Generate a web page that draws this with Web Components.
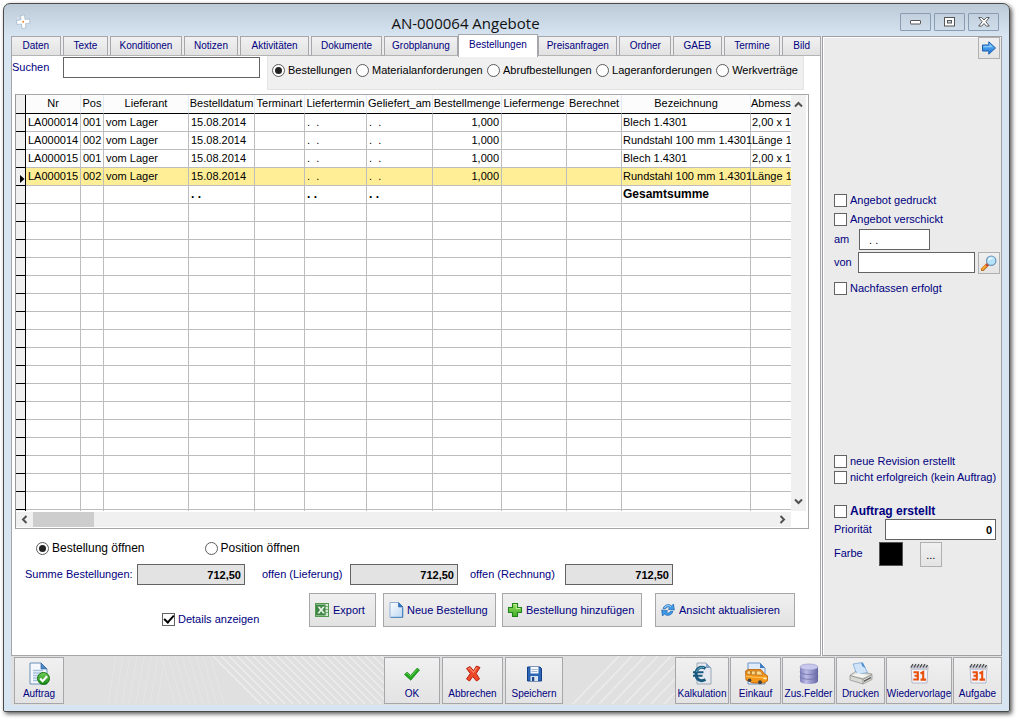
<!DOCTYPE html>
<html lang="de">
<head>
<meta charset="utf-8">
<title>AN-000064 Angebote</title>
<style>
  html { height: 100%; }
  body {
    margin: 0; min-height: 100%; box-sizing: border-box; padding: 3px 9px 9px 3px;
    display: flex; background: #fff; color: #000;
    font: 11px/14px "Liberation Sans", Arial, sans-serif;
    --navy: #000080; --line: #a6a6ab; --field: #636363; --face: #ebebeb;
  }
</style>
</head>
<body>
<app-window></app-window>
<script>
const ICONS = {
  plusmark: '<g stroke="#93aac0" stroke-width=".6" fill="#fff"><path d="M2 3 4.500 1.500 6 6l3-.5L8.500 2 11 1.500 12 5l3-.4.5 4-3.500.8.5 4.100-4 .5-.5-4-4 .8L3.500 7 7 6Z" stroke="none" opacity=".25" transform="translate(-1 1)"/><path d="M5.500 1.500 9.500 1l.5 4.500 4.500-.5.5 4-4.500.7.5 4.300-4 .5-.5-4.500-4.500.5-.5-4L6 5.800Z"/></g><circle cx="8.200" cy="7.800" r="1" fill="#e8852c"/>',
  arrow: '<path d="M1.500 5h6.300V1.800L14.500 8l-6.700 6.200V11H1.500Z" fill="url(#b)" stroke="#1d5fae"/><path d="M2.500 6h6V4l3.500 3.300H2.500Z" fill="#9bd2fb" opacity=".8"/><defs><linearGradient id="b" x2="0" y2="1"><stop stop-color="#6cc0fb"/><stop offset="1" stop-color="#1e76d6"/></linearGradient></defs>',
  lens: '<path d="M6.500 9.500 1.500 14.500" stroke="#b86b13" stroke-width="3.400" stroke-linecap="round"/><path d="M6.300 9.300 1.600 14" stroke="#f7a63b" stroke-width="2" stroke-linecap="round"/><path d="m7.300 8.700-2 2" stroke="#c33" stroke-width="2"/><circle cx="10.200" cy="5.700" r="4.700" fill="#b5e4fa" stroke="#6f94b8" stroke-width="1.200"/><path d="M7.200 5.500a3 3 0 0 1 3-2.800c1.500 0 2.200.8 2.200.8-2 0-3.500.8-5.200 2Z" fill="#fff"/>',
  excel: '<rect x="1.500" y="1.500" width="13" height="13" fill="#d5e8d2" stroke="#559852"/><path d="M11 4.500h3M11 7.500h3M11 10.500h3" stroke="#79ae75"/><path d="M2 2.500h9.500v11H2z" fill="#3d8a43"/><path d="M3 4.300h3l1.200 2 1.300-2h3L8.700 8l3 3.800h-3L7.200 9.600l-1.400 2.200h-3L5.600 8Z" fill="#e9f5e7" stroke="#1f6428" stroke-width=".5"/>',
  page: '<path d="M2 .5h8.500L15 5v10.500H2Z" fill="url(#g)" stroke="#8fb0d4"/><path d="M10.500.5V5H15Z" fill="#2f76c4" stroke="#2b66ab" stroke-width=".6"/><path d="M14.500 5.500v9.800H3" fill="none" stroke="#4b83be"/><defs><linearGradient id="g" x2="1" y2="1"><stop stop-color="#fff"/><stop offset="1" stop-color="#b9d6f2"/></linearGradient></defs>',
  plus: '<path d="M5.500 1.500h5v4h4v5h-4v4h-5v-4h-4v-5h4Z" fill="url(#p)" stroke="#23831c" stroke-width="1.100"/><path d="M6.500 2.500h2.800v4h4" fill="none" stroke="#c5f29c"/><defs><linearGradient id="p" x2="0" y2="1"><stop stop-color="#9be05e"/><stop offset="1" stop-color="#3cae2a"/></linearGradient></defs>',
  refresh: '<g fill="#3b9be8" stroke="#1a62b0" stroke-width=".7"><path d="M3 6.500C4.500 2.500 9 1.500 11.500 4L13.500 2l.8 6-6-.7 1.500-1.600C8.500 4.500 6.500 4.800 5.500 6.800Z"/><path d="M13 9.500c-1.500 4-6 5-8.500 2.500L2.500 14l-.8-6 6 .7-1.500 1.600c1.300 1.200 3.300.9 4.300-1.100Z"/></g><path d="M4.500 5.800C6 3.200 9 3 11 5" fill="none" stroke="#bfe4ff" stroke-width=".9"/>',
  order: '<path d="M3 1h11l6 6v15H3Z" fill="#f4f8fd" stroke="#6b8fb8"/><path d="M14 1v6h6Z" fill="#4c87c6" stroke="#3467a3" stroke-width=".7"/><path d="M6 8.500h10M6 11h11M6 13.500h6M6 16h5M6 18.500h4" stroke="#a5bfdd" stroke-width="1.300"/><circle cx="16.500" cy="16.500" r="6" fill="url(#o)" stroke="#187413"/><path d="m13.200 16.600 2.400 2.600 4.500-5" fill="none" stroke="#fff" stroke-width="2.200"/><defs><linearGradient id="o" x2="0" y2="1"><stop stop-color="#74d15a"/><stop offset="1" stop-color="#128512"/></linearGradient></defs>',
  check: '<path d="M4.500 12.500 7 10.200l3.600 3.200 6.500-7.200 2.400 1.800-8.700 10.200Z" fill="#22a51f" stroke="#19891a" stroke-width=".8" stroke-linejoin="round"/><path d="m6 12.200 1-1 3.700 3.300 6.500-7" fill="none" stroke="#6ad64f" stroke-width=".9"/>',
  cross: '<path d="M5.500 6.500 9 4.500l3.500 4.300L15.500 4 19 5.500l-3.800 6 3.300 5.500-3 2-3.800-4.500L8.500 19l-3-2 3.800-5.500Z" fill="#ef4a2c" stroke="#b9210d" stroke-linejoin="round"/><path d="m7 7 1.700-1 3.800 4.500 3.200-5" fill="none" stroke="#ff9d80"/>',
  disk: '<path d="M5.500 5h12.500l1.500 1.500V19H5.500Z" fill="#2a66b5" stroke="#153f85"/><path d="M8.500 5h8v6.500h-8z" fill="#f5f8fc"/><path d="M9.500 7.500h6M9.500 9.500h6" stroke="#93a5bd" stroke-width=".8"/><path d="M8.500 14h7.500v5H8.500z" fill="#d9e3ef"/><path d="M10 15h2.200v4H10z" fill="#1d4587"/>',
  euro: '<path d="M7 1h9l5 5v16H7Z" fill="#e6eaf0" stroke="#9aa5b5"/><path d="M16 1v5h5Z" fill="#7ea3c7"/><path d="M15.500 6.500C10 3.500 6 7 6 12s4 8.500 9.500 5.500" fill="none" stroke="#195a7e" stroke-width="3"/><path d="M3 10.300h10.500M3 13.700h9.500" stroke="#195a7e" stroke-width="2"/><path d="M14 5.500C10 4.500 7 7.500 6.600 10" fill="none" stroke="#69b5cb"/>',
  van: '<path d="M4 1h12l5 5v16H4Z" fill="#dfebfa" stroke="#6a93c6"/><path d="M16 1v5h5Z" fill="#3f7cc4"/><path d="M1.500 9 4 7.500h13l3.500 4.500 3 1.800v5L20 21H9l-7-3Z" fill="#f59716" stroke="#bb5d07" stroke-width=".8"/><path d="M3 9h3.500v3.500L3 12ZM7.500 9h3.700v4l-3.700-.4ZM12.300 9h4l2.700 4h-6.700Z" fill="#fbd98e" stroke="#a4651b" stroke-width=".6"/><path d="M2 14.500 22.500 16" stroke="#ffc562"/><circle cx="5.500" cy="18.300" r="1.800" fill="#444"/><circle cx="16" cy="20.300" r="2" fill="#444"/><path d="M19.500 16.500h3" stroke="#fff3c4" stroke-width="1.500"/>',
  database: '<path d="M3 5v14c0 1.700 4 3 9 3s9-1.300 9-3V5Z" fill="url(#d)"/><ellipse cx="12" cy="5" rx="9" ry="3" fill="#c9c9ee" stroke="#9191c6" stroke-width=".6"/><path d="M3 9.500c0 1.700 4 3 9 3s9-1.300 9-3M3 14.300c0 1.700 4 3 9 3s9-1.300 9-3" fill="none" stroke="#6f6fa8" stroke-width=".8"/><defs><linearGradient id="d"><stop stop-color="#7f7fbc"/><stop offset=".35" stop-color="#bdbde8"/><stop offset="1" stop-color="#6464a4"/></linearGradient></defs>',
  printer: '<path d="m1 13.500 6-4.500 16 3v5.500l-9 4.500L1 18Z" fill="#d9d9d5" stroke="#8d8d89" stroke-width=".7"/><path d="m1 13.500 13 3.700 9-4.700M14 17.200V22" fill="none" stroke="#85857f" stroke-width=".8"/><path d="M4 2 13.500.5l5 10-10.500 2Z" fill="#cfe4f9" stroke="#6f9ecf" stroke-width=".7"/><path d="m12 1 2 .2 2.500 4.800-3-1.500Z" fill="#4d8fd5"/><path d="m15 18.500 7-3.700v1.500l-7 3.700Z" fill="#555"/><path d="m3 13.500 5-2.500 11 2-5 2.800Z" fill="#f3f3f0"/>',
  calendar: '<path d="M4 4h17l-1 17H5Z" fill="#f3f4fb" stroke="#a5a8bd" stroke-width=".8"/><path d="M4 4h17l-.3 4H4.300Z" fill="#c9ccd6"/><path d="M4 5.500 6 2M7 5.500 9 2M10 5.500 12 2M13 5.500 15 2M16 5.500 18 2M19 5.500 20.500 3" stroke="#4a4a4a" stroke-width="1.300"/><g fill="none" stroke="#e8500c" stroke-width="2.100"><path d="M6.500 10.200h4.300v7.300H6.300M7.500 13.800h3.300M13.500 11.500l2.700-1.500v8.500M13.500 17.600H19"/></g>',
};

const BASE = `*{box-sizing:border-box} button,input{font:inherit;margin:0;border-radius:0}
  button:focus-visible,input:focus-visible{outline:1px dotted #000080}`;

function define(name, css, html, after) {
  const tpl = document.createElement('template');
  customElements.define(name, class extends HTMLElement {
    constructor() { super(); this.attachShadow({ mode: 'open' }); }
    connectedCallback() {
      if (this.shadowRoot.firstChild) return;
      tpl.innerHTML = `<style>${BASE}${css}</style>${typeof html === 'function' ? html(this) : html}`;
      this.shadowRoot.append(tpl.content.cloneNode(true));
      if (after) after(this);
    }
  });
}

define('app-icon', ':host{display:block;flex:none} svg{display:block}', el => {
  const s = el.getAttribute('size') || 16;
  const box = s > 16 ? 24 : 16;
  return `<svg width="${s}" height="${s}" viewBox="0 0 ${box} ${box}" fill="none" aria-hidden="true">${ICONS[el.getAttribute('name')]}</svg>`;
});

/* Icon beside its caption */
define('push-button', `
  :host{display:block;height:34px}
  button{display:flex;align-items:center;gap:3px;width:100%;height:100%;padding:0 0 0 4px;
    border:1px solid var(--line);background:linear-gradient(#f0f0f0,#e2e2e2);color:var(--navy);white-space:nowrap}`,
  el => `<button type="button"><app-icon name="${el.getAttribute('icon')}"></app-icon><slot></slot></button>`);

/* Icon above its caption */
define('tool-button', `
  :host{display:block;height:47px}
  button{display:flex;flex-direction:column;align-items:center;justify-content:flex-end;gap:2px;width:100%;height:100%;padding:0 0 3px;
    border:1px solid var(--line);background:linear-gradient(#f0f0f0,#e3e3e3);color:var(--navy);font-size:10px;line-height:12px;white-space:nowrap}`,
  el => `<button type="button"><app-icon name="${el.getAttribute('icon')}" size="24"></app-icon><slot></slot></button>`);

define('small-button', `
  :host{display:block;width:22px;height:22px}
  button{display:grid;place-items:center;width:100%;height:100%;padding:0;border:1px solid #b0b0b0;background:linear-gradient(#f0f0f0,#e4e4e4)}`,
  el => `<button type="button" aria-label="${el.getAttribute('label')}"><slot></slot></button>`);

define('check-field', `
  :host{display:block;color:var(--navy)}
  label{display:flex;align-items:center;gap:3px;white-space:nowrap}
  input{appearance:none;width:13px;height:13px;border:1px solid var(--field);background:#fff;display:grid;place-items:center}
  input:checked::after{content:"";width:8px;height:4px;margin:0 0 2px;border:solid #000;border-width:0 0 2px 2px;transform:rotate(-48deg)}`,
  el => `<label><input type="checkbox" ${el.hasAttribute('checked') ? 'checked' : ''}><span><slot></slot></span></label>`);

define('radio-group', `
  :host{display:flex}
  label{display:flex;align-items:center;gap:3px;white-space:nowrap;line-height:14px}
  input{appearance:none;flex:none;width:13px;height:13px;border:1px solid #5c5c5c;border-radius:50%;background:#fff;display:grid;place-items:center}
  input:checked::after{content:"";width:7px;height:7px;border-radius:50%;background:#222}`,
  el => el.getAttribute('options').split('|').map((o, i) =>
    `<label><input type="radio" name="g" ${i ? '' : 'checked'}>${o}</label>`).join(''));

define('text-field', `
  :host{display:block}
  label{display:flex;color:var(--navy);white-space:nowrap}
  span{width:var(--label,auto);flex:none;padding-top:3px}
  input{flex:1;min-width:0;width:0;height:21px;padding:0 3px;border:1px solid var(--field);background:var(--bg,#fff);
    color:#000;text-align:var(--align,left);font-weight:var(--weight,400)}`,
  el => `<label><span>${el.getAttribute('label')}</span><input type="text" value="${el.getAttribute('value') || ''}" ${el.hasAttribute('readonly') ? 'readonly' : ''}></label>`);

define('title-bar', `
  :host{display:flex;align-items:center;height:32px;padding:0 3px 0 4px}
  h1{flex:1;margin:0;padding:5px 0 0;text-align:center;font:15px/20px "Open Sans","Noto Sans",sans-serif;color:#111}
  app-icon{margin-top:3px}
  .w{display:flex;gap:3px;padding:3px 0 0}
  button{width:31px;height:18px;padding:0;display:grid;place-items:center;border:1px solid #8a9bb4;border-radius:1px;background:linear-gradient(#c3d0dd,#cfdce9)}`,
  `<app-icon name="plusmark"></app-icon><h1>AN-000064 Angebote</h1>
   <div class="w">
    <button type="button" aria-label="Minimieren"><svg width="12" height="6"><rect x=".5" y="1.500" width="10" height="3.500" rx=".5" fill="#fff" stroke="#555"/></svg></button>
    <button type="button" aria-label="Maximieren"><svg width="12" height="10"><rect x=".5" y=".5" width="10" height="8.500" fill="#fff" stroke="#555"/><rect x="3.500" y="3.500" width="4" height="2.500" fill="#c9d6e3" stroke="#555"/></svg></button>
    <button type="button" aria-label="Schließen"><svg width="12" height="10"><path d="M.7.6h3L6 3 8.300.6h3L7.800 4.700l3.500 4.400h-3L6 6.500 3.700 9.100h-3l3.500-4.400Z" fill="#fff" stroke="#4c4c4c" stroke-width=".9"/></svg></button>
   </div>`);

define('tab-strip', `
  :host{display:grid;grid-template-columns:50fr 46fr 72fr 55fr 69fr 72fr 74fr 77fr 80fr 52fr 49fr 57fr 39fr;column-gap:2px;align-items:end;height:22px;position:relative;z-index:1}
  button{height:20px;min-width:0;padding:0;border:1px solid var(--line);border-bottom-color:#b4b4b4;background:linear-gradient(#f1f1f1,#e2e2e2);
    color:var(--navy);font-size:10px;line-height:12px;white-space:nowrap}
  [aria-selected=true]{height:23px;margin:0 -2px -1px;background:#fff;border-bottom:0;padding-bottom:3px}`,
  ['Daten','Texte','Konditionen','Notizen','Aktivitäten','Dokumente','Grobplanung','Bestellungen','Preisanfragen','Ordner','GAEB','Termine','Bild']
    .map(t => `<button type="button" role="tab" aria-selected="${t === 'Bestellungen'}">${t}</button>`).join(''),
  el => el.setAttribute('role', 'tablist'));

const COLS = [['Nr',55],['Pos',23],['Lieferant',85],['Bestelldatum',66],['Terminart',50],['Liefertermin',62],['Geliefert_am',66],['Bestellmenge',69],['Liefermenge',65],['Berechnet',55],['Bezeichnung',129],['Abmess',40]];
const item = (nr, pos, name, size) => [nr, pos, 'vom Lager', '15.08.2014', '', '.&nbsp; .', '.&nbsp; .', '1,000', '', '', name, size];
const ROWS = [
  item('LA000014', '001', 'Blech 1.4301', '2,00 x 1'),
  item('LA000014', '002', 'Rundstahl 100 mm 1.4301', 'Länge 1'),
  item('LA000015', '001', 'Blech 1.4301', '2,00 x 1'),
  item('LA000015', '002', 'Rundstahl 100 mm 1.4301', 'Länge 1'),
  ['', '', '', '. .', '', '. .', '. .', '', '', '', 'Gesamtsumme', ''],
];
while (ROWS.length < 23) ROWS.push(COLS.map(() => ''));

define('data-grid', `
  :host{display:grid;grid-template:minmax(0,1fr) 17px / minmax(0,1fr) 17px;border:1px solid var(--line);border-left-color:#999;background:#fff;min-height:200px}
  .view{overflow:hidden;min-height:0;height:0;min-height:100%}
  table{border-collapse:separate;border-spacing:0;table-layout:fixed;width:775px}
  th,td{height:18px;padding:0 2px 2px;border:solid #bdbdbd;border-width:0 1px 1px 0;font-weight:400;line-height:14px;white-space:nowrap;text-align:left}
  thead th{height:19px;padding:0 0 3px;text-align:center;background:#fcfcfc;border-color:#e3ebf5;border-bottom-color:#000}
  tr>:last-child{border-right:0}
  thead th:last-child{text-align:left}
  td:nth-child(12){padding-left:1px}
  td:nth-child(13){padding:0 0 2px 1px}
  tr>th:first-child{padding:0;background:#f0f0f0;border-color:#000}
  tbody tr>th:first-child{padding-top:4px}
  .sel td{background:#ffee96}
  .sum td{font-weight:700;font-size:12px}
  td:nth-child(9){text-align:right}
  svg{display:block;margin-left:auto}
  .v,.h{background:#f0f0f0;display:flex;justify-content:space-between}
  .v{flex-direction:column;padding:5px 3px;margin:0 2px 0 0}
  .h{grid-row:2;grid-column:1/3;align-items:center;padding:0 4px;margin:1px 17px 1px 0}
  .thumb{width:61px;height:15px;background:#cdcdcd;margin:0 auto 0 4px}`,
  () => {
    const arrow = d => `<svg width="9" height="9" viewBox="0 0 9 9" style="margin:0"><path d="${d}" fill="none" stroke="#505050" stroke-width="2"/></svg>`;
    return `<div class="view"><table><colgroup><col style="width:10px">${COLS.map(c => `<col style="width:${c[1]}px">`).join('')}</colgroup>
    <thead><tr><th></th>${COLS.map(c => `<th scope="col">${c[0]}</th>`).join('')}</tr></thead>
    <tbody>${ROWS.map((r, i) => `<tr class="${i === 3 ? 'sel' : i === 4 ? 'sum' : ''}"><th>${i === 3 ? '<svg width="6" height="8"><path d="M1 0v8l4.500-4Z"/></svg>' : ''}</th>${r.map(c => `<td>${c}</td>`).join('')}</tr>`).join('')}</tbody></table></div>
    <div class="v">${arrow('M1 6.500 4.500 3 8 6.500')}${arrow('M1 2.500 4.500 6 8 2.500')}</div>
    <div class="h">${arrow('M6.500 1 3 4.500 6.500 8')}<div class="thumb"></div>${arrow('M2.500 1 6 4.500 2.500 8')}</div>`;
  });

define('orders-page', `
  :host{display:flex;flex-direction:column;background:#fff;border:1px solid var(--line);min-width:0}
  .top{display:flex;justify-content:space-between;height:38px;padding-right:16px}
  .search{width:248px;--label:51px;padding-top:1px}
  .kind{width:537px;height:34px;background:#f0f0f0;border:1px solid #e3e3e3;border-top:0;align-items:flex-start;justify-content:space-between;padding:7px 5px 0 4px}
  data-grid{flex:1;margin:0 11px 0 3px}
  .open{font-size:12px;padding:12px 0 0 24px;gap:60px}
  .sums{display:flex;padding:9px 0 0 13px;--bg:#e3e3e3;--align:right;--weight:700}
  .acts{display:flex;padding:8px 0 28px 150px}
  check-field{align-self:flex-end;width:147px;margin-bottom:1px}`,
  `<div class="top"><text-field class="search" label="Suchen"></text-field>
    <radio-group class="kind" options="Bestellungen|Materialanforderungen|Abrufbestellungen|Lageranforderungen|Werkverträge"></radio-group></div>
   <data-grid></data-grid>
   <radio-group class="open" options="Bestellung öffnen|Position öffnen"></radio-group>
   <div class="sums">
    <text-field readonly label="Summe Bestellungen:" value="712,50" style="--label:112px;width:220px;margin-right:17px"></text-field>
    <text-field readonly label="offen (Lieferung)" value="712,50" style="--label:88px;width:196px;margin-right:12px"></text-field>
    <text-field readonly label="offen (Rechnung)" value="712,50" style="--label:95px;width:203px"></text-field></div>
   <div class="acts"><check-field checked>Details anzeigen</check-field>
    <push-button icon="excel" style="width:67px;margin-right:7px">Export</push-button>
    <push-button icon="page" style="width:113px;margin-right:6px">Neue Bestellung</push-button>
    <push-button icon="plus" style="width:140px;margin-right:13px">Bestellung hinzufügen</push-button>
    <push-button icon="refresh" style="width:140px">Ansicht aktualisieren</push-button></div>`);

define('side-panel', `
  :host{display:flex;flex-direction:column;width:180px;flex:none;background:var(--face);border:1px solid #a0a0a4;box-shadow:inset 1px 1px #fff;padding:0 1px 88px 11px;color:var(--navy)}
  .go{align-self:flex-end}
  .a{margin-top:134px;display:grid;gap:5px}
  .row{display:flex;gap:3px}
  .am{--label:25px;width:96px;margin-top:3px;white-space:pre}
  .von{--label:24px;width:141px}
  .b{margin-top:auto;display:grid;gap:2px}
  .done{margin-top:20px;font-weight:700;font-size:12px}
  .prio{--label:51px;width:162px;--align:right;--weight:700;margin-top:1px}
  .swatch{width:24px;height:24px;background:#000;border:1px solid #555;margin-left:16px}
  .dots{height:25px;margin-left:17px;color:#000}`,
  `<small-button class="go" label="Weiter"><app-icon name="arrow"></app-icon></small-button>
   <div class="a"><check-field>Angebot gedruckt</check-field><check-field>Angebot verschickt</check-field></div>
   <text-field class="am" label="am" value="  . ."></text-field>
   <div class="row" style="margin-top:2px"><text-field class="von" label="von"></text-field><small-button label="Suchen"><app-icon name="lens"></app-icon></small-button></div>
   <check-field style="margin-top:7px">Nachfassen erfolgt</check-field>
   <div class="b"><check-field>neue Revision erstellt</check-field><check-field>nicht erfolgreich (kein Auftrag)</check-field></div>
   <check-field class="done">Auftrag erstellt</check-field>
   <text-field class="prio" label="Priorität" value="0"></text-field>
   <div class="row" style="gap:0;margin-top:2px"><span style="padding-top:4px">Farbe</span><div class="swatch"></div><small-button class="dots" label="Farbe wählen">...</small-button></div>`);

const strokes = (n, step, x0, dx) => Array.from({ length: n }, (_, i) => `M${x0 + i * step} 0l${dx} 48`).join('');
define('tool-bar', `
  :host{display:flex;gap:2px;position:relative;background:#e0e0e0;padding:1px 0 1px 3px;height:49px;overflow:hidden}
  tool-button{position:relative}
  .r{display:flex;gap:1px}
  svg{position:absolute;left:0;top:0}`,
  `<svg width="992" height="49" aria-hidden="true" fill="none">
    <g stroke="#e5e5e5"><path d="${strokes(8, 7, 105, -8)}${strokes(8, 7, 150, 14)}"/></g>
    <g stroke="#ececec" stroke-width="1.500"><path d="${strokes(22, 8, 202, 48)}${strokes(9, 13, 608, -46)}"/></g></svg>
   <tool-button icon="order" style="width:50px">Auftrag</tool-button>
   <span style="flex:316"></span>
   <tool-button icon="check" style="width:56px">OK</tool-button>
   <tool-button icon="cross" style="width:61px">Abbrechen</tool-button>
   <tool-button icon="disk" style="width:58px">Speichern</tool-button>
   <span style="flex:108"></span>
   <div class="r">
   <tool-button icon="euro" style="width:54px">Kalkulation</tool-button>
   <tool-button icon="van" style="width:51px">Einkauf</tool-button>
   <tool-button icon="database" style="width:53px">Zus.Felder</tool-button>
   <tool-button icon="printer" style="width:49px">Drucken</tool-button>
   <tool-button icon="calendar" style="width:66px">Wiedervorlage</tool-button>
   <tool-button icon="calendar" style="width:49px">Aufgabe</tool-button></div>`);

define('app-window', `
  :host{flex:1;min-width:0;display:flex;flex-direction:column;border:1px solid #4a4a4a;border-radius:7px 7px 2px 2px;padding:0 7px 6px;
    background:linear-gradient(#bccad8,#d7e4f1 32px,#d7e4f1);box-shadow:2px 2px 4px rgba(0,0,0,.65)}
  main{flex:1;display:flex;gap:1px;background:linear-gradient(#ececec,#fff);min-height:0}
  .left{flex:1;min-width:0;display:flex;flex-direction:column}
  orders-page{flex:1;margin-top:-1px}
  tab-strip{margin-top:-2px}`,
  `<title-bar></title-bar>
   <main><div class="left"><tab-strip></tab-strip><orders-page></orders-page></div><side-panel></side-panel></main>
   <tool-bar></tool-bar>`);
</script>
</body>
</html>
